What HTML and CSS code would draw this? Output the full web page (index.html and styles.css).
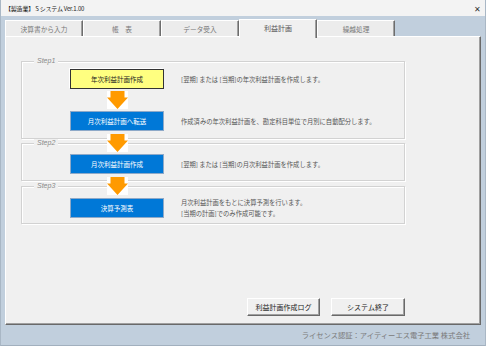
FILE: index.html
```html
<!DOCTYPE html>
<html lang="ja">
<head>
    <meta charset="UTF-8">
    <title>【製造業】 S システム Ver.1.00</title>
    <link rel="stylesheet" href="styles.css">
</head>
<body>
    <div class="window">
        <div class="titlebar">
            <span class="title">【製造業】 S システム Ver.1.00</span>
            <span class="close">✕</span>
        </div>

        <div class="tabs">
            <div class="tab">決算書から入力</div>
            <div class="tab">帳　表</div>
            <div class="tab">データ受入</div>
            <div class="tab active">利益計画</div>
            <div class="tab">繰越処理</div>
        </div>

        <div class="panel">
            <div class="steps">
                <!-- Step1 -->
                <div class="step step1">
                    <span class="step-label">Step1</span>
                    <div class="step-row">
                        <div class="btn btn-yellow">年次利益計画作成</div>
                        <p class="desc">[翌期] または [当期]の年次利益計画を作成します。</p>
                    </div>
                    <div class="arrow">
                        <svg width="21" height="18" viewBox="0 0 21 18"><rect width="21" height="18" fill="#fff"/><path d="M3.5 0h14v6.5h3.5L10.5 18 0 6.5h3.5z" fill="#ff9a00"/></svg>
                    </div>
                    <div class="step-row">
                        <div class="btn btn-blue">月次利益計画へ転送</div>
                        <p class="desc">作成済みの年次利益計画を、勘定科目単位で月別に自動配分します。</p>
                    </div>
                </div>

                <!-- Step2 -->
                <div class="step step2">
                    <span class="step-label">Step2</span>
                    <div class="step-row">
                        <div class="btn btn-blue">月次利益計画作成</div>
                        <p class="desc">[翌期] または [当期]の月次利益計画を作成します。</p>
                    </div>
                </div>

                <!-- Step3 -->
                <div class="step step3">
                    <span class="step-label">Step3</span>
                    <div class="step-row">
                        <div class="btn btn-blue">決算予測表</div>
                        <p class="desc">月次利益計画をもとに決算予測を行います。<br>[当期の計画]でのみ作成可能です。</p>
                    </div>
                </div>

                <div class="arrow arrow-over arrow-a">
                    <svg width="21" height="18" viewBox="0 0 21 18"><rect width="21" height="18" fill="#fff"/><path d="M3.5 0h14v6.5h3.5L10.5 18 0 6.5h3.5z" fill="#ff9a00"/></svg>
                </div>
                <div class="arrow arrow-over arrow-b">
                    <svg width="21" height="18" viewBox="0 0 21 18"><rect width="21" height="18" fill="#fff"/><path d="M3.5 0h14v6.5h3.5L10.5 18 0 6.5h3.5z" fill="#ff9a00"/></svg>
                </div>
            </div>

            <div class="actions">
                <div class="btn-sys log">利益計画作成ログ</div>
                <div class="btn-sys">システム終了</div>
            </div>
        </div>

        <footer>
            <p>ライセンス認証：アイティーエス電子工業 株式会社</p>
        </footer>
    </div>
</body>
</html>
```

FILE: styles.css
```css
* {
    margin: 0;
    padding: 0;
    box-sizing: border-box;
}

body {
    font-family: "Noto Sans CJK JP", "Noto Sans", sans-serif;
    background-color: #c1cfdd;
}

.window {
    width: 486px;
    height: 346px;
    display: flex;
    flex-direction: column;
    background-color: #c1cfdd;
    border-left: 1px solid #a9b7c5;
    border-right: 1px solid #a9b7c5;
    border-bottom: 1px solid #a2b0be;
}

/* Title bar */
.titlebar {
    height: 16px;
    display: flex;
    justify-content: space-between;
    align-items: center;
    padding: 0 4px 0 4px;
    background-color: #f3f3f3;
    color: #222;
}

.title {
    font-size: 6px;
    letter-spacing: -0.2px;
}

.close {
    font-size: 8px;
    color: #333;
}

/* Tabs */
.tabs {
    display: flex;
    height: 20px;
    padding: 3px 0 0 4px;
}

.tab {
    width: 78px;
    height: 17px;
    margin-top: 1px;
    display: flex;
    justify-content: center;
    align-items: center;
    font-size: 6.7px;
    color: #777;
    background-color: #ececec;
    border-top: 1px solid #fff;
    border-left: 1px solid #fff;
    border-right: 1px solid #6d6d6d;
    box-shadow: inset -1px 0 0 #a0a0a0;
}

.tab.active {
    height: 19px;
    margin-top: 0;
    padding-bottom: 2px;
    background-color: #f0f0f0;
    color: #555;
    font-size: 7px;
    position: relative;
    z-index: 1;
}

/* Panel */
.panel {
    height: 289px;
    margin: 0 4px;
    padding: 24px 75px 8px 15px;
    display: flex;
    flex-direction: column;
    background-color: #f0f0f0;
    border-top: 1px solid #fff;
    border-left: 1px solid #fff;
    border-right: 1px solid #696969;
    border-bottom: 1px solid #696969;
    box-shadow: inset -1px -1px 0 #a0a0a0;
}

.steps {
    position: relative;
    width: 384px;
}

.step {
    position: relative;
    padding-left: 48px;
    border: 1px solid #d2d2d2;
    box-shadow: inset 1px 1px 0 #fff, 1px 1px 0 #fff;
}

.step1 {
    padding-top: 7px;
    padding-bottom: 7px;
}

.step2 {
    margin-top: 4px;
    padding-top: 10px;
    padding-bottom: 6px;
}

.step3 {
    margin-top: 5px;
    padding-top: 10px;
    padding-bottom: 4px;
}

.step-label {
    position: absolute;
    top: -5px;
    left: 12px;
    padding: 0 3px;
    font-size: 7px;
    line-height: 8px;
    font-style: italic;
    color: #8a8a8a;
    background-color: #f0f0f0;
    font-family: "Liberation Sans", sans-serif;
}

.step-row {
    display: flex;
    align-items: center;
    gap: 17px;
}

.btn {
    width: 94px;
    height: 20px;
    flex-shrink: 0;
    display: flex;
    justify-content: center;
    align-items: center;
    font-size: 6.5px;
}

.btn-yellow {
    background-color: #ffff80;
    color: #222;
    border: 1px solid #333;
    box-shadow: -1px -1px 0 #fff;
}

.btn-blue {
    background-color: #0078d7;
    color: #fff;
    border: 1px solid #8ea9c8;
}

.desc {
    font-size: 6.3px;
    line-height: 11px;
    color: #555;
}

.arrow {
    width: 21px;
    height: 18px;
    margin: 2px 0 2px 37px;
}

.arrow svg {
    display: block;
}

.arrow-over {
    position: absolute;
    left: 86px;
    margin: 0;
}

.arrow-a {
    top: 73px;
}

.arrow-b {
    top: 116px;
}

/* Bottom buttons */
.actions {
    margin-top: auto;
    width: 384px;
    display: flex;
    justify-content: flex-end;
    gap: 11px;
}

.btn-sys {
    width: 74px;
    height: 18px;
    display: flex;
    justify-content: center;
    align-items: center;
    font-size: 7px;
    color: #222;
    background-color: #f0f0f0;
    border-top: 1px solid #fff;
    border-left: 1px solid #fff;
    border-right: 1px solid #696969;
    border-bottom: 1px solid #696969;
    box-shadow: inset -1px -1px 0 #a0a0a0;
}

.btn-sys.log {
    width: 73px;
}

/* Footer */
footer {
    flex: 1;
    display: flex;
    justify-content: flex-end;
    align-items: center;
    padding-right: 15px;
    font-size: 7.3px;
    color: #7a7a7a;
}
```
